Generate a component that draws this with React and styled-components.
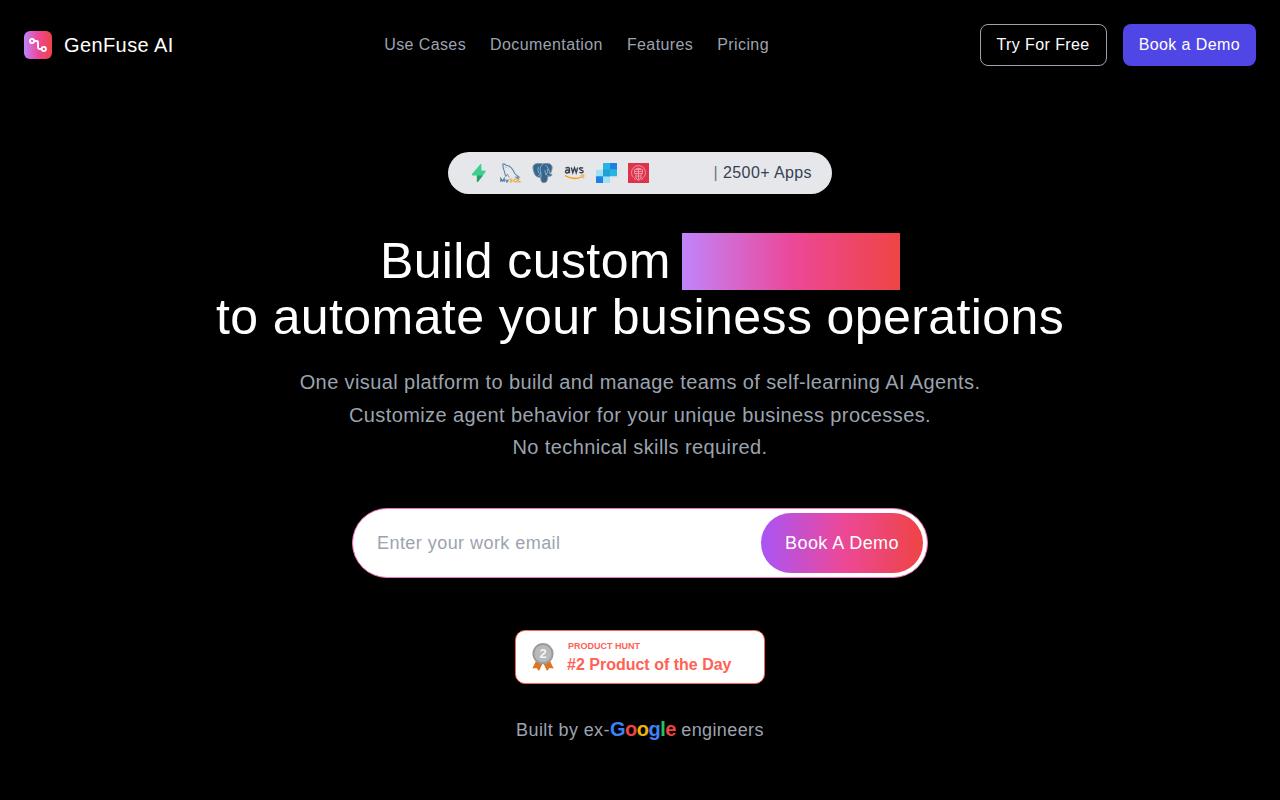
import React, { useState } from "react";
import styled, { createGlobalStyle } from "styled-components";

const GlobalStyle = createGlobalStyle`
  *, *::before, *::after {
    box-sizing: border-box;
  }
  body {
    margin: 0;
    background: #000;
    color: #fff;
    font-family: "Liberation Sans", Arial, sans-serif;
    font-size: 16px;
    line-height: 24px;
    letter-spacing: 0.025em;
  }
`;

const Header = styled.header`
  display: flex;
  align-items: center;
  justify-content: space-between;
  padding: 24px;
`;

const Logo = styled.a`
  display: flex;
  align-items: center;
  gap: 12px;
  color: #fff;
  font-size: 20px;
  line-height: 28px;
  text-decoration: none;
`;

const Nav = styled.nav`
  display: flex;
  gap: 24px;
`;

const NavLink = styled.a`
  color: #9ca3af;
  text-decoration: none;
  &:hover {
    color: #fff;
  }
`;

const Actions = styled.div`
  display: flex;
  gap: 16px;
`;

const HeaderButton = styled.button`
  padding: 8px 16px;
  border: ${(props) => (props.$filled ? "0" : "1px solid #9ca3af")};
  border-radius: 8px;
  background: ${(props) => (props.$filled ? "#4f46e5" : "transparent")};
  color: #fff;
  font: inherit;
  letter-spacing: 0.025em;
  cursor: pointer;
`;

const Hero = styled.main`
  display: flex;
  flex-direction: column;
  align-items: center;
  padding: 62px 24px 48px;
  text-align: center;
`;

const AppsPill = styled.div`
  display: flex;
  align-items: center;
  justify-content: space-between;
  width: 100%;
  max-width: 384px;
  height: 42px;
  padding: 0 20px;
  border-radius: 21px;
  background: #e5e7eb;
  color: #374151;
`;

const AppIcons = styled.div`
  display: flex;
  gap: 11px;
  svg {
    display: block;
    width: 21px;
    height: 20px;
  }
`;

const Divider = styled.span`
  color: #6b7280;
`;

const Title = styled.h1`
  margin: 39px 0 0;
  font-size: 50px;
  font-weight: 400;
  line-height: 56px;
`;

const Highlight = styled.span`
  padding-bottom: 1px;
  background: linear-gradient(to right, #c084fc, #ec4899, #ef4444);
  color: transparent;
`;

const Subtitle = styled.p`
  margin: 21px 0 0;
  color: #9ca3af;
  font-size: 20px;
  line-height: 1.625;
`;

const EmailForm = styled.form`
  display: flex;
  width: 100%;
  max-width: 576px;
  margin-top: 44px;
  padding: 4px;
  border: 1px solid #f472b6;
  border-radius: 35px;
  background: #fff;
`;

const EmailInput = styled.input`
  flex: 1;
  min-width: 0;
  padding: 0 20px;
  border: 0;
  outline: 0;
  background: transparent;
  color: #111827;
  font: inherit;
  font-size: 18px;
  letter-spacing: 0.025em;
  &::placeholder {
    color: #9ca3af;
  }
`;

const SubmitButton = styled.button`
  padding: 16px 24px;
  border: 0;
  border-radius: 30px;
  background: linear-gradient(to right, #a855f7, #ec4899, #ef4444);
  color: #fff;
  font: inherit;
  font-size: 18px;
  line-height: 28px;
  letter-spacing: 0.025em;
  cursor: pointer;
`;

const AwardBadge = styled.a`
  display: flex;
  align-items: center;
  gap: 13px;
  width: 250px;
  height: 54px;
  margin-top: 52px;
  padding: 0 16px;
  border: 1px solid #ff6154;
  border-radius: 10px;
  background: #fff;
  color: #ff6154;
  font-weight: 700;
  letter-spacing: normal;
  text-align: left;
  text-decoration: none;
`;

const AwardText = styled.span`
  display: flex;
  flex-direction: column;
  gap: 2px;
`;

const AwardLabel = styled.span`
  padding-left: 1px;
  font-size: 9px;
  line-height: 14px;
`;

const AwardName = styled.span`
  font-size: 16px;
  line-height: 20px;
`;

const BuiltBy = styled.p`
  margin: 31px 0 0;
  color: #9ca3af;
  font-size: 18px;
  line-height: 28px;
`;

const Google = styled.span`
  font-size: 20px;
  font-weight: 700;
  letter-spacing: -0.025em;
`;

const Letter = styled.span`
  color: ${(props) => props.$color};
`;

const links = ["Use Cases", "Documentation", "Features", "Pricing"];

const googleLetters = [
  ["G", "#3b82f6"],
  ["o", "#ef4444"],
  ["o", "#eab308"],
  ["g", "#3b82f6"],
  ["l", "#22c55e"],
  ["e", "#ef4444"],
];

function LogoMark() {
  return (
    <svg width="28" height="28" viewBox="0 0 28 28" aria-hidden="true">
      <defs>
        <linearGradient id="logoFill" x1="0" x2="1" y1="0" y2="0">
          <stop offset="0" stopColor="#c084fc" />
          <stop offset="0.5" stopColor="#ec4899" />
          <stop offset="1" stopColor="#ef4444" />
        </linearGradient>
      </defs>
      <rect width="28" height="28" rx="6" fill="url(#logoFill)" />
      <g fill="none" stroke="#fff" strokeWidth="1.9">
        <circle cx="8" cy="10" r="2.1" />
        <circle cx="19.8" cy="18" r="2.1" />
        <path d="M10.2 10H12.500Q14 10 14 11.500V16.500Q14 18 15.500 18H17.700" />
      </g>
    </svg>
  );
}

function Supabase() {
  return (
    <svg viewBox="0 0 21 20" aria-label="Supabase">
      <path d="M12.300 1.200c.4-.5 1.100-.2 1.100.4V7.500h3.500c.7 0 1.100.8.6 1.400L10 18.800c-.4.5-1.100.2-1.100-.4V12.500H4.600c-.7 0-1.100-.8-.6-1.400Z" fill="#3ecf8e" />
      <path d="M8.900 12.500h6L10 18.800c-.4.5-1.100.2-1.100-.4Z" fill="#249f69" />
    </svg>
  );
}

function MySql() {
  return (
    <svg viewBox="0 0 21 20" aria-label="MySQL">
      <path
        d="M6 13.500C4.700 12 5 10.300 4.500 8.600 4 6.600 2.600 5 3.300 3.500c-.6-1-1-2.400.1-2.600 1-.2 2 .8 2.600 1.300 3.700.2 7 3.700 8 7 .5 1.600 1.500 2.300 2.800 3.200L19 14l-3 .2 3 2"
        fill="none"
        stroke="#5d87a1"
        strokeWidth="1.1"
      />
      <path d="M6 13.500l1.300-2.500 2 3.500M5.500 4.200l1 .3" fill="none" stroke="#5d87a1" strokeWidth=".8" />
      <path d="M.8 19v-3.500l1.700 2.500 1.700-2.500V19M5.500 16.500l1.400 2.300 1.500-2.300-1.800 3.300" fill="none" stroke="#4d819f" strokeWidth="1.2" />
      <path d="M12.500 16H10.500q-1 .8.200 1.300l1.200.4q.6 1-.6 1.100H9.500M15.500 16q-1.800 0-1.800 1.400t1.800 1.400 1.800-1.400T15.500 16m.4 1.800 1.500 1.500M18.700 15.700v3.200h2" fill="none" stroke="#f0aa4e" strokeWidth="1.200" />
    </svg>
  );
}

function Postgres() {
  return (
    <svg viewBox="0 0 20 20" aria-label="PostgreSQL">
      <path
        d="M6.500.6c2-.3 3.200 0 4 .3C14-.2 18.800.3 19.500 3.600c.4 2.400-.7 5.400-2.200 7.500 1 .3 2.200 0 2.200.7 0 1.100-2.300 1.700-4.100 1.200-.7 1.700.2 6.300-3.500 6.600-4 .4-3.300-3.600-3.700-5.700-1 .6-2.800.3-3.800-.4C2.500 13 .4 7.500.5 4 .6 1.600 3 .2 6.500.6Z"
        fill="#336791"
        stroke="#7e8d99"
        strokeWidth="1"
      />
      <path
        d="M8.500 14c-.3-2 .2-3.500-.3-5-.4-1.500-1-2.500-.2-4.500C8.600 2.800 9.700 1.600 10.500 1M8.400 9.500c-1 1.300-2.500.8-2.700-.5-.3-1.700-.3-4 .5-5.300M13 2c2.500 2 4 5.500 4.300 8.800M12.500 7c-.3 2 1 3 .8 5M5.500 12.500c1.300 0 1.700-.8 2.700-1.500M15 12.800l-1.200-1.500c1.300-1.500 1.700-3.600 1.200-5.300"
        fill="none"
        stroke="#b5c6d4"
        strokeWidth=".7"
      />
    </svg>
  );
}

function Aws() {
  return (
    <svg viewBox="0 0 20 20" aria-label="AWS">
      <g fill="none" stroke="#38424f" strokeWidth="1.400">
        <path d="M1 5.200Q4.800 3.300 4.900 6.200V10.200M4.800 7.200Q1 6.500 1 8.700 1.200 10.500 3.200 9.800 4.500 9.400 4.800 8.300" />
        <path d="M6.800 4.500 8.300 9.700 10 4.800 11.700 9.700 13.200 4.500" />
        <path d="M18.700 5.200Q15.200 4 15.100 5.800 15.200 6.800 17 7.200 18.900 7.700 18.700 8.700 18.200 10.300 14.900 9.300" />
      </g>
      <path d="M.5 12.500Q9.500 18 18 13.500" fill="none" stroke="#f90" strokeWidth="1.300" />
      <path d="M16 12.300q3.200-.7 3.500 0 .2 1-1.100 3" fill="none" stroke="#f90" strokeWidth=".9" />
    </svg>
  );
}

function SendGrid() {
  return (
    <svg viewBox="0 0 21 20" aria-label="SendGrid">
      <path fill="#9de1f3" d="M0 6.670h14v6.670H0zM7 6.670h7V20H7z" />
      <path fill="#27b4e1" d="M7 0h7v6.670h7v6.660H7z" />
      <path fill="#1a82e2" d="M14 0h7v6.670h-7zM0 13.330h7V20H0z" />
      <path fill="#239fd7" d="M7 6.670h7v6.660H7z" />
    </svg>
  );
}

function RedApp() {
  return (
    <svg viewBox="0 0 21 20" aria-label="AWS service">
      <path fill="#dd344c" d="M0 0h21v20H0z" />
      <g fill="none" stroke="#f3a9b3" strokeWidth=".8">
        <path d="M5.500 14.500a7 7 0 1 1 10 0" />
        <path d="M6.500 6.500h8v4h-8zM8 10.500v4M13 10.500v4M10.500 4.500v12M8 5.500h5M7 8.500h7M8.300 13h4.500" />
        <circle cx="10.500" cy="16.500" r="1" />
        <circle cx="7.500" cy="15.500" r="1" />
        <circle cx="13.500" cy="15.500" r="1" />
      </g>
    </svg>
  );
}

function Medal() {
  return (
    <svg width="22" height="28" viewBox="0 0 22 28" aria-hidden="true">
      <path d="M4.500 17 .3 25.500l4.200-.5L7 28l4-8.500L15 28l2.500-3 4.200.5L17.500 17Z" fill="#df7320" />
      <circle cx="11" cy="10.700" r="10.600" fill="#9b9b9b" />
      <circle cx="11" cy="10.700" r="8.600" fill="#b9b9b9" />
      <text x="11" y="15.300" textAnchor="middle" fontSize="13" fontWeight="700" fill="#f3f3f3">
        2
      </text>
    </svg>
  );
}

export default function App() {
  const [email, setEmail] = useState("");

  return (
    <>
      <GlobalStyle />
      <Header>
        <Logo href="#">
          <LogoMark />
          GenFuse AI
        </Logo>
        <Nav>
          {links.map((link) => (
            <NavLink key={link} href="#">
              {link}
            </NavLink>
          ))}
        </Nav>
        <Actions>
          <HeaderButton type="button">Try For Free</HeaderButton>
          <HeaderButton type="button" $filled>
            Book a Demo
          </HeaderButton>
        </Actions>
      </Header>

      <Hero>
        <AppsPill>
          <AppIcons>
            <Supabase />
            <MySql />
            <Postgres />
            <Aws />
            <SendGrid />
            <RedApp />
          </AppIcons>
          <span>
            <Divider>|</Divider> 2500+ Apps
          </span>
        </AppsPill>

        <Title>
          Build custom <Highlight>AI Agents</Highlight>
          <br />
          to automate your business operations
        </Title>

        <Subtitle>
          One visual platform to build and manage teams of self-learning AI Agents.
          <br />
          Customize agent behavior for your unique business processes.
          <br />
          No technical skills required.
        </Subtitle>

        <EmailForm onSubmit={(e) => e.preventDefault()}>
          <EmailInput
            type="email"
            aria-label="Work email"
            placeholder="Enter your work email"
            value={email}
            onChange={(e) => setEmail(e.target.value)}
          />
          <SubmitButton type="submit">Book A Demo</SubmitButton>
        </EmailForm>

        <AwardBadge href="#">
          <Medal />
          <AwardText>
            <AwardLabel>PRODUCT HUNT</AwardLabel>
            <AwardName>#2 Product of the Day</AwardName>
          </AwardText>
        </AwardBadge>

        <BuiltBy>
          Built by ex-
          <Google>
            {googleLetters.map(([char, color], i) => (
              <Letter key={i} $color={color}>
                {char}
              </Letter>
            ))}
          </Google>{" "}
          engineers
        </BuiltBy>
      </Hero>
    </>
  );
}
